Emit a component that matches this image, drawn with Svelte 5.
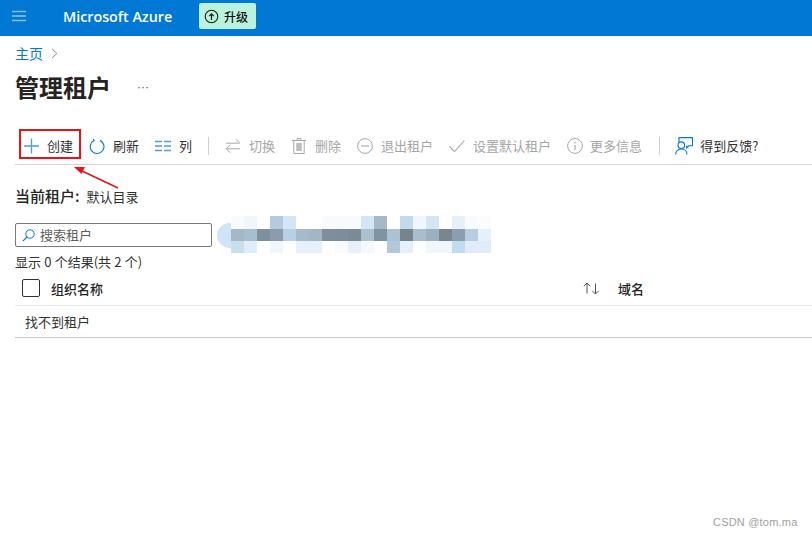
<script>
  const W = '#ffffff';
  const mosaic = [
    ['#f8fbfe','#f0f6fc',W,'#b4cade','#d3e6f6',W,W,'#f8fbfe','#f8fbfe','#f8fbfe','#d3e6f6','#a5b9c9',W,'#c3d9ec','#f0f6fc','#d3e6f6',W,'#e6f0fa','#f8fbfe','#fafcfe'],
    ['#a5b8c6','#a6bfce','#7e909f','#8d9cac','#b9cfe8','#a6bacd','#a3b6c6','#7f8e9c','#7e8d9c','#7c8a96','#abbfcc','#7f93a1','#acc2d3','#76848d','#a9bdcc','#9bb0c0','#78868f','#8d9db0','#b8cde0','#e6f0fa'],
    ['#c9dfec','#e0edf8',W,'#f0f6fc',W,'#e6f0fa','#e6f0fa',W,'#f8fbfe','#e6f0fa','#f5f9fd',W,'#b0c8da','#e6f0fa',W,'#f0f6fc','#f0f6fc','#c0dcf0','#e0edf8','#e0edf8']
  ].flat();
</script>

<div class="page">
  <header class="top">
    <svg class="menu" width="14" height="12" viewBox="0 0 14 12"><path d="M0 1.5h14M0 6h14M0 10.5h14" stroke="#8cc3ee" stroke-width="1.4"/></svg>
    <span class="brand">Microsoft Azure</span>
    <span class="upgrade">
      <svg width="15" height="15" viewBox="0 0 15 15"><circle cx="7.5" cy="7.5" r="6.3" fill="none" stroke="#1a1a1a" stroke-width="1.1"/><path d="M7.5 11V5M5.2 7.2l2.3-2.4 2.3 2.4" fill="none" stroke="#1a1a1a" stroke-width="1.2"/></svg>
      升级
    </span>
  </header>

  <main class="body">
    <nav class="crumb">
      <span>主页</span>
      <svg width="7" height="11" viewBox="0 0 7 11"><path d="M1 .8 5.8 5.5 1 10.2" fill="none" stroke="#8a8a8a" stroke-width="1"/></svg>
    </nav>

    <div class="title-row">
      <h1>管理租户</h1>
      <span class="dots">···</span>
    </div>

    <div class="toolbar">
      <span class="item on">
        <svg width="15" height="16" viewBox="0 0 15 16"><path d="M7.5 .5v15M0 8h15" stroke="#4a9fdf" stroke-width="1.3"/></svg>
        创建
      </span>
      <span class="item on">
        <svg width="16" height="17" viewBox="0 0 17 17"><path d="M5.2 2.2a7.3 7.3 0 1 0 6.4-.2M4.6 .4l.8 2.2-2.2.6" fill="none" stroke="#0078d4" stroke-width="1.2"/></svg>
        刷新
      </span>
      <span class="item on">
        <svg width="16" height="16" viewBox="0 0 16 16"><path d="M0 3.5h7M9 3.5h7M0 8h7M9 8h7M0 12.5h7M9 12.5h7" stroke="#4a9fdf" stroke-width="1.4"/></svg>
        列
      </span>
      <span class="sep"></span>
      <span class="item off">
        <svg width="16" height="16" viewBox="0 0 16 16"><path d="M1 5.2h13.5M10.8 1.2l4 4M15 10.8H1.5M5.2 6.8l-4 4 4 4" fill="none" stroke="#a8a8a8" stroke-width="1"/></svg>
        切换
      </span>
      <span class="item off">
        <svg width="16" height="16" viewBox="0 0 16 16"><path d="M1 2.5h14M6 2.5V.6h4v1.9M2.8 2.5v13h10.4v-13" fill="none" stroke="#a8a8a8" stroke-width="1"/><rect x="5.2" y="5" width="5.6" height="8" fill="#bdbdbd"/></svg>
        删除
      </span>
      <span class="item off">
        <svg width="16" height="16" viewBox="0 0 16 16"><circle cx="8" cy="8" r="7.4" fill="none" stroke="#a8a8a8" stroke-width="1"/><path d="M4 8h8" stroke="#a8a8a8" stroke-width="1.1"/></svg>
        退出租户
      </span>
      <span class="item off">
        <svg width="16" height="16" viewBox="0 0 16 16"><path d="M.5 8.5 5.5 13.5 15.5 2.5" fill="none" stroke="#a8a8a8" stroke-width="1.1"/></svg>
        设置默认租户
      </span>
      <span class="item off tight">
        <svg width="16" height="16" viewBox="0 0 16 16"><circle cx="8" cy="8" r="7.4" fill="none" stroke="#a8a8a8" stroke-width="1"/><path d="M8 7v5" stroke="#a8a8a8" stroke-width="1.2"/><circle cx="8" cy="4.8" r=".8" fill="#a8a8a8"/></svg>
        更多信息
      </span>
      <span class="sep"></span>
      <span class="item on feedback">
        <svg width="18" height="18" viewBox="0 0 18 18"><path d="M4 5V.6h13.5v8.2h-3.6l-2.2 2.2V8.6" fill="none" stroke="#0078d4" stroke-width="1.1"/><circle cx="6.3" cy="8.2" r="3.3" fill="#fff" stroke="#0078d4" stroke-width="1.1"/><path d="M.6 17.4c0-7.2 11.4-7.2 11.4 0" fill="none" stroke="#0078d4" stroke-width="1.1"/></svg>
        得到反馈?
      </span>
    </div>

    <p class="current"><b>当前租户:</b><span class="dir">默认目录</span></p>

    <div class="search-row">
      <label class="search">
        <svg width="13" height="13" viewBox="0 0 13 13"><circle cx="8" cy="5" r="4.2" fill="none" stroke="#0078d4" stroke-width="1"/><path d="M5 8 .8 12.2" stroke="#0078d4" stroke-width="1.1"/></svg>
        <span class="ph">搜索租户</span>
      </label>
      <div class="blur">
        <span class="blob"></span>
        <div class="cells">
          {#each mosaic as c}<i style="background:{c}"></i>{/each}
        </div>
      </div>
    </div>

    <p class="count">显示 0 个结果(共 2 个)</p>

    <div class="thead">
      <span class="check"></span>
      <span class="name">组织名称</span>
      <svg class="sort" width="17" height="13" viewBox="0 0 17 13"><path d="M4 11.5V1M.8 4.2 4 1l3.2 3.2" fill="none" stroke="#555" stroke-width="1"/><path d="M12.5 1.5V12M9.3 8.8l3.2 3.2 3.2-3.2" fill="none" stroke="#555" stroke-width="1"/></svg>
      <span class="domain">域名</span>
    </div>
    <div class="empty">找不到租户</div>
  </main>

  <svg class="note" width="812" height="537" viewBox="0 0 812 537">
    <rect x="20" y="130" width="60" height="28" fill="none" stroke="#e8141c" stroke-width="2"/>
    <path d="M118 188 81 170.5" stroke="#e8141c" stroke-width="1.6"/>
    <path d="M74 167 85 167 81.5 174Z" fill="#e8141c"/>
  </svg>

  <span class="mark">CSDN @tom.ma</span>
</div>

<style>
  :global(body) { margin: 0; background: #fff; }
  .page {
    position: relative;
    height: 537px;
    overflow: hidden;
    font-family: "Noto Sans CJK SC", "Noto Sans", sans-serif;
    font-size: 13px;
    color: #323130;
  }
  .top {
    height: 36px;
    box-sizing: border-box;
    padding: 0 0 4px 12px;
    background: #0078d4;
    display: flex;
    align-items: center;
  }
  .menu { flex: none; }
  .brand {
    margin-left: 37px;
    width: 136px;
    color: #fff;
    font-family: "Open Sans", sans-serif;
    font-weight: 600;
    font-size: 14.3px;
    white-space: nowrap;
  }
  .upgrade {
    height: 26px;
    width: 57px;
    box-sizing: border-box;
    padding-left: 5px;
    background: #b9f3dd;
    border-radius: 2px;
    display: flex;
    align-items: center;
    gap: 5px;
    color: #111;
    font-size: 12px;
    font-weight: 500;
  }
  .body { padding-left: 15px; }
  .crumb {
    display: flex;
    align-items: center;
    gap: 8px;
    height: 18px;
    margin-top: 8px;
    color: #0078d4;
    font-size: 14px;
    line-height: 18px;
  }
  .title-row {
    display: flex;
    align-items: center;
    height: 36px;
    margin-top: 7px;
  }
  h1 {
    margin: 0;
    width: 122px;
    font-size: 24px;
    font-weight: 700;
    color: #252423;
    line-height: 36px;
    white-space: nowrap;
  }
  .dots { color: #555; font-size: 12px; font-family: "Liberation Sans", sans-serif; }
  .toolbar {
    display: flex;
    align-items: center;
    height: 36px;
    margin-top: 21px;
    padding: 2px 0 0 9px;
    box-sizing: content-box;
    border-bottom: 1px solid #d6d6d6;
    white-space: nowrap;
  }
  .item {
    display: flex;
    align-items: center;
    gap: 8px;
    margin-right: 16px;
    font-size: 13px;
    line-height: 18px;
  }
  .item svg { flex: none; }
  .item.tight { gap: 7px; margin-right: 17px; }
  .item.feedback { gap: 7px; margin-left: -1px; }
  .on { color: #323130; }
  .off { color: #a6a6a6; }
  .sep {
    width: 1px;
    height: 18px;
    background: #cfcfcf;
    margin-right: 16px;
  }
  .current {
    margin: 21px 0 0;
    height: 20px;
    line-height: 20px;
    font-size: 13px;
    color: #323130;
  }
  .current b { font-size: 15px; font-weight: 500; color: #252423; }
  .dir { margin-left: 7px; }
  .search-row {
    display: flex;
    margin-top: 10px;
    height: 37px;
    align-items: flex-start;
  }
  .search {
    margin-top: 7px;
    width: 197px;
    height: 24px;
    box-sizing: border-box;
    border: 1px solid #7a7a7a;
    border-radius: 2px;
    display: flex;
    align-items: center;
    gap: 5px;
    padding-left: 6px;
    color: #605e5c;
    font-size: 13px;
  }
  .ph { margin-top: -2px; }
  .blur {
    position: relative;
    margin-left: 5px;
    width: 274px;
    height: 37px;
  }
  .blob {
    position: absolute;
    left: 0;
    top: 7px;
    width: 26px;
    height: 25px;
    border-radius: 50%;
    background: #cfe4f6;
  }
  .cells {
    position: absolute;
    left: 14px;
    top: 0;
    display: grid;
    grid-template-columns: repeat(20, 13px);
    grid-template-rows: 13px 12px 12px;
  }
  .cells i { display: block; }
  .count {
    margin: 0;
    height: 18px;
    line-height: 18px;
    font-size: 13px;
    word-spacing: 0.3px;
  }
  .thead {
    display: flex;
    align-items: center;
    height: 35px;
    border-bottom: 1px solid #e9e9e9;
    padding-left: 7px;
    box-sizing: border-box;
  }
  .check {
    width: 16px;
    height: 16px;
    border: 1px solid #323130;
    border-radius: 2px;
    margin-right: 11px;
    flex: none;
  }
  .name { font-weight: 500; width: 532px; flex: none; color: #252423; }
  .sort { margin-right: 18px; flex: none; }
  .domain { font-weight: 500; color: #252423; }
  .empty {
    height: 31px;
    line-height: 31px;
    padding-left: 10px;
    border-bottom: 1px solid #c8c8c8;
  }
  .note { position: absolute; left: 0; top: 0; pointer-events: none; }
  .mark {
    position: absolute;
    left: 713px;
    top: 516px;
    font-family: "Liberation Sans", sans-serif;
    font-size: 11px;
    letter-spacing: 0.2px;
    color: #a0a0a0;
  }
</style>
